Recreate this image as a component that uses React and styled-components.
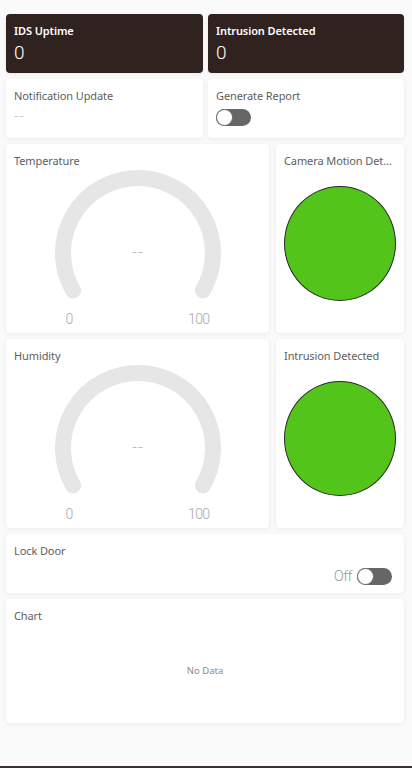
import React from "react";
import styled, { createGlobalStyle } from "styled-components";

const Global = createGlobalStyle`
  html, body { margin: 0; padding: 0; background: #fafafa; }
  body { font-family: "Noto Sans", "Open Sans", sans-serif; }
  * { box-sizing: border-box; }
`;

const Page = styled.div`
  width: 412px;
  height: 768px;
  display: flex;
  flex-direction: column;
  background: #fafafa;
  overflow: hidden;
`;

const Content = styled.div`
  padding: 14px 8px 0 6px;
  display: flex;
  flex-direction: column;
  gap: 6px;
`;

const Row = styled.div`
  display: grid;
  grid-template-columns: ${(p) => p.$cols};
  column-gap: ${(p) => p.$gap || 5}px;
`;

const Card = styled.div`
  background: ${(p) => (p.$dark ? "#30221f" : "#ffffff")};
  border-radius: 4px;
  box-shadow: 0 1px 4px rgba(0, 0, 0, 0.07);
  height: ${(p) => p.$h}px;
  padding: 9px 8px 0 8px;
  display: flex;
  flex-direction: column;
  position: relative;
  overflow: hidden;
`;

const Title = styled.div`
  font-size: 11px;
  line-height: 16px;
  letter-spacing: -0.1px;
  color: ${(p) => (p.$dark ? "#ffffff" : "#5e5e5e")};
  font-weight: ${(p) => (p.$dark ? 600 : 400)};
  white-space: nowrap;
  overflow: hidden;
  text-overflow: ellipsis;
`;

const BigValue = styled.div`
  font-family: Roboto, "Noto Sans", sans-serif;
  font-weight: 300;
  font-size: 19px;
  line-height: 22px;
  color: #ffffff;
  margin-top: 3px;
`;

const Dash = styled.div`
  font-family: Roboto, sans-serif;
  font-weight: 300;
  font-size: 16px;
  letter-spacing: 1px;
  color: #c4c4c4;
  margin-top: 3px;
`;

const Track = styled.div`
  width: 35px;
  height: 17px;
  border-radius: 9px;
  background: #666666;
  position: relative;
  margin-top: ${(p) => p.$mt || 0}px;
  flex-shrink: 0;
`;

const Knob = styled.div`
  position: absolute;
  left: 1px;
  top: 1px;
  width: 15px;
  height: 15px;
  border-radius: 50%;
  background: #ffffff;
  box-shadow: 0 0 0 1px #777;
`;

const GaugeWrap = styled.div`
  display: flex;
  flex-direction: column;
  align-items: center;
  margin-top: 1px;
`;

const GaugeLabels = styled.div`
  width: 144px;
  display: flex;
  justify-content: space-between;
  font-family: Roboto, sans-serif;
  font-weight: 300;
  font-size: 14px;
  letter-spacing: -0.6px;
  color: #a9a9a9;
  margin-top: -1px;
`;

const LedWrap = styled.div`
  flex: 1;
  display: flex;
  justify-content: center;
  padding-top: 17px;
`;

const Led = styled.div`
  width: 115px;
  height: 115px;
  border-radius: 50%;
  background: #52c41a;
  border: 1px solid #2a2a2a;
`;

const SwitchRow = styled.div`
  display: flex;
  justify-content: flex-end;
  align-items: center;
  gap: 5px;
  margin-top: 8px;
  padding-right: 4px;
`;

const OffText = styled.span`
  font-family: Roboto, sans-serif;
  font-weight: 300;
  font-size: 15px;
  letter-spacing: -0.6px;
  color: #9a9a9a;
`;

const NoData = styled.div`
  flex: 1;
  display: flex;
  align-items: center;
  justify-content: center;
  font-size: 9.5px;
  color: #8c8c8c;
  padding-bottom: 6px;
`;

const Footer = styled.div`
  margin-top: auto;
  height: 2px;
  background: #3b3035;
`;

function Gauge() {
  const cx = 83, cy = 83, r = 75;
  const a0 = (210 * Math.PI) / 180;
  const a1 = (-30 * Math.PI) / 180;
  const x0 = cx + r * Math.cos(a0), y0 = cy - r * Math.sin(a0);
  const x1 = cx + r * Math.cos(a1), y1 = cy - r * Math.sin(a1);
  return (
    <GaugeWrap>
      <svg width="166" height="142" viewBox="0 0 166 142">
        <path
          d={`M ${x0} ${y0} A ${r} ${r} 0 1 1 ${x1} ${y1}`}
          fill="none"
          stroke="#e6e6e6"
          strokeWidth="16"
          strokeLinecap="round"
        />
        <text x={cx} y={cy + 5} textAnchor="middle" fontFamily="Roboto, sans-serif" fontWeight="300" fontSize="17" letterSpacing="1" fill="#b4b4b4">--</text>
      </svg>
      <GaugeLabels>
        <span>0</span>
        <span>100</span>
      </GaugeLabels>
    </GaugeWrap>
  );
}

export default function App() {
  return (
    <Page>
      <Global />
      <Content>
        <Row $cols="197px 1fr">
          <Card $dark $h={59}>
            <Title $dark>IDS Uptime</Title>
            <BigValue>0</BigValue>
          </Card>
          <Card $dark $h={59}>
            <Title $dark>Intrusion Detected</Title>
            <BigValue>0</BigValue>
          </Card>
        </Row>
        <Row $cols="197px 1fr">
          <Card $h={59}>
            <Title>Notification Update</Title>
            <Dash>--</Dash>
          </Card>
          <Card $h={59}>
            <Title>Generate Report</Title>
            <Track $mt={5}><Knob /></Track>
          </Card>
        </Row>
        <Row $cols="263px 1fr" $gap={7}>
          <Card $h={189}>
            <Title>Temperature</Title>
            <Gauge />
          </Card>
          <Card $h={189}>
            <Title>Camera Motion Detection</Title>
            <LedWrap><Led /></LedWrap>
          </Card>
        </Row>
        <Row $cols="263px 1fr" $gap={7}>
          <Card $h={189}>
            <Title>Humidity</Title>
            <Gauge />
          </Card>
          <Card $h={189}>
            <Title>Intrusion Detected</Title>
            <LedWrap><Led /></LedWrap>
          </Card>
        </Row>
        <Card $h={59}>
          <Title>Lock Door</Title>
          <SwitchRow>
            <OffText>Off</OffText>
            <Track><Knob /></Track>
          </SwitchRow>
        </Card>
        <Card $h={124}>
          <Title>Chart</Title>
          <NoData>No Data</NoData>
        </Card>
      </Content>
      <Footer />
    </Page>
  );
}
